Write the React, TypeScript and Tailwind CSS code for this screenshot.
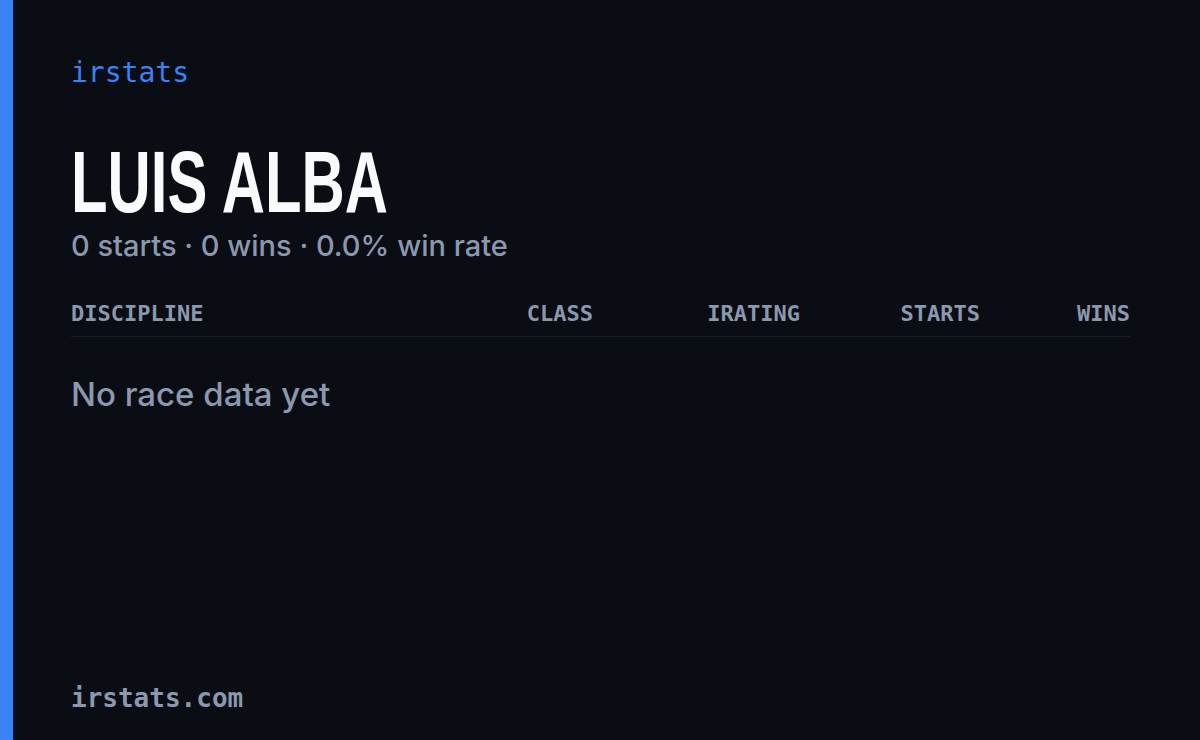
const columns = [
  { label: "DISCIPLINE", align: "text-left" },
  { label: "CLASS", align: "text-right" },
  { label: "IRATING", align: "text-right" },
  { label: "STARTS", align: "text-right" },
  { label: "WINS", align: "text-right" },
];

const mono = "font-['DejaVu_Sans_Mono','Liberation_Mono',monospace]";

export default function App() {
  const driver = { name: "LUIS ALBA", starts: 0, wins: 0 };
  const rate = driver.starts ? (driver.wins / driver.starts) * 100 : 0;

  return (
    <main className="flex h-[740px] w-full bg-[#0a0d14] overflow-hidden">
      {/* accent bar */}
      <div className="w-[13px] shrink-0 bg-[#3b82f6]" />

      <div className="flex flex-1 flex-col pl-[58px] pr-[70px] pt-[53px] pb-[26px]">
        <div className={`${mono} text-[28px] leading-[40px] text-[#3b82f6]`}>irstats</div>

        <h1 className="mt-[40px] h-[98px] font-['Liberation_Sans',Arial,sans-serif] text-[88px] font-bold leading-[98px] text-[#f8fafc]">
          <span className="inline-block origin-left scale-x-[0.68] whitespace-nowrap">{driver.name}</span>
        </h1>
        <p className="font-['Inter',sans-serif] text-[29px] font-medium leading-[30px] text-[#8b98ad]">
          {driver.starts} starts · {driver.wins} wins · {rate.toFixed(1)}% win rate
        </p>

        {/* table */}
        <div
          className={`${mono} mt-[39px] grid grid-cols-[1fr_120px_207px_180px_150px] border-b border-[#1a1e29] pb-[8px] text-[22px] font-bold leading-[28px] text-[#8b98ad]`}
        >
          {columns.map((c) => (
            <div key={c.label} className={c.align}>
              {c.label}
            </div>
          ))}
        </div>
        <div className="mt-[37px] font-['Inter',sans-serif] text-[33px] font-medium leading-[40px] text-[#8b98ad]">
          No race data yet
        </div>

        <div className="flex-1" />
        <div className={`${mono} text-[26px] font-bold leading-[32px] text-[#8b98ad]`}>irstats.com</div>
      </div>
    </main>
  );
}
